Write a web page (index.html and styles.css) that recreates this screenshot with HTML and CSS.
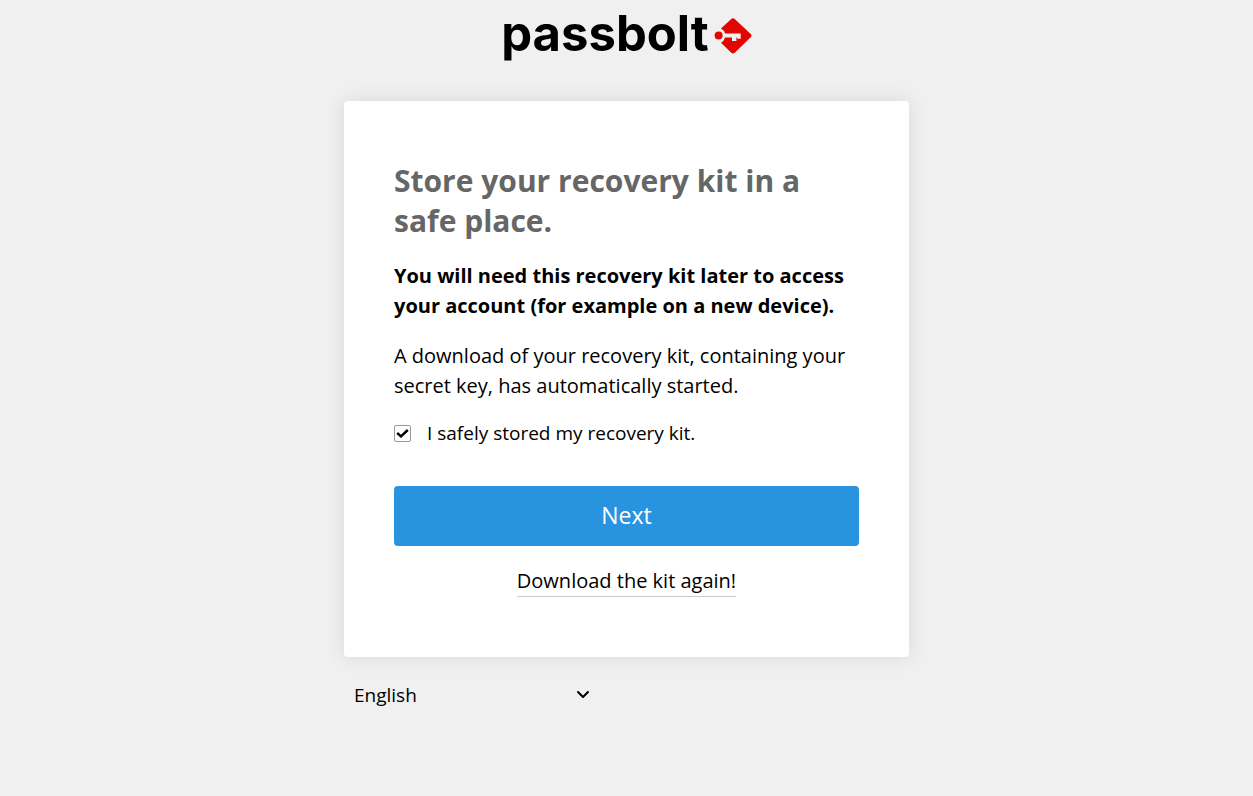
FILE: index.html
```html
<!DOCTYPE html>
<html lang="en">
<head>
  <meta charset="UTF-8" />
  <title>Passbolt</title>
  <meta name="viewport" content="width=device-width, initial-scale=1.0" />
  <link rel="stylesheet" href="styles.css">
</head>
<body>

  <div class="container">
    <header class="logo">
      <span class="logo-text">passbolt</span>
      <svg class="logo-icon" viewBox="0 0 38 36" width="38" height="36" aria-hidden="true">
        <path fill="#e10600" d="M17 1.2Q19 -.7 21 1.2L36.7 16Q38.3 17.6 36.7 19.2L21 34.5Q19 36.4 17 34.5L7 24.8Q10.2 22.8 11 19.4H18V23H22.4V19.4H23.2V20.8H26.7V15.4H11Q10.2 12.4 7 10.6Z" />
        <circle fill="#e10600" cx="4.6" cy="17.6" r="4" />
      </svg>
    </header>

    <main class="card">
      <h1>Store your recovery kit in a safe place.</h1>
      <p><strong>You will need this recovery kit later to access your account (for example on a new device).</strong></p>
      <p>A download of your recovery kit, containing your secret key, has automatically started.</p>
      <form>
        <div class="checkbox">
          <span class="checkbox-box">
            <input type="checkbox" id="stored" checked>
            <svg viewBox="0 0 17 17" width="17" height="17" aria-hidden="true">
              <path d="M3.2 8L7 11.3L13.8 5" />
            </svg>
          </span>
          <label for="stored">I safely stored my recovery kit.</label>
        </div>
        <button class="next-btn" type="button">Next</button>
      </form>
      <div class="download">
        <a href="#">Download the kit again!</a>
      </div>
    </main>

    <footer class="language">
      <select id="language" aria-label="Language">
        <option>English</option>
      </select>
      <svg viewBox="0 0 14 10" width="14" height="10" aria-hidden="true">
        <path d="M2 2L7 7L12 2" />
      </svg>
    </footer>
  </div>

</body>
</html>
```
FILE: styles.css
```css
* {
  box-sizing: border-box;
}

body {
  margin: 0;
  background: #f0f0f0;
  color: #000;
  font-family: 'Open Sans', sans-serif;
  font-size: 20px;
  line-height: 30px;
}

.container {
  width: 100%;
  max-width: 565px;
  margin: 0 auto;
}

.logo {
  display: flex;
  justify-content: center;
  align-items: center;
  gap: 5px;
  padding: 4px 0 37px;
}

.logo-text {
  font-family: 'Inter', sans-serif;
  font-size: 49px;
  font-weight: 700;
  line-height: 60px;
}

.logo-icon {
  margin-top: 4px;
}

.card {
  padding: 60px 50px;
  background: #fff;
  border-radius: 4px;
  box-shadow: 0 0 20px rgba(0, 0, 0, 0.1);
}

h1 {
  margin: 0 0 20px;
  color: #666;
  font-size: 30px;
  font-weight: 700;
  line-height: 40px;
}

p {
  margin: 0 0 20px;
}

.checkbox {
  display: flex;
  align-items: center;
  gap: 16px;
  margin-bottom: 40px;
  font-size: 19px;
  line-height: 25px;
}

.checkbox-box {
  display: grid;
}

.checkbox-box > * {
  grid-area: 1 / 1;
}

.checkbox-box input {
  appearance: none;
  width: 17px;
  height: 17px;
  margin: 0;
  background: #fff;
  border: 1px solid #999;
  border-radius: 2px;
}

.checkbox-box svg {
  fill: none;
  stroke: #000;
  stroke-width: 2.4;
  pointer-events: none;
  visibility: hidden;
}

.checkbox-box input:checked + svg {
  visibility: visible;
}

.next-btn {
  display: block;
  width: 100%;
  height: 60px;
  padding: 0 0 2px;
  background: #2894df;
  border: none;
  border-radius: 4px;
  color: #fff;
  font-family: inherit;
  font-size: 23px;
  cursor: pointer;
}

.download {
  display: flex;
  justify-content: center;
  margin-top: 20px;
}

.download a {
  border-bottom: 1px solid #ccc;
  color: #000;
  text-decoration: none;
}

.language {
  display: grid;
  align-items: center;
  width: 256px;
  max-width: 100%;
  margin-top: 18px;
}

.language > * {
  grid-area: 1 / 1;
}

.language select {
  appearance: none;
  width: 100%;
  height: 40px;
  padding: 0 10px;
  background: transparent;
  border: none;
  color: #000;
  font-family: inherit;
  font-size: 19px;
}

.language svg {
  justify-self: end;
  margin-right: 10px;
  fill: none;
  stroke: #000;
  stroke-width: 2;
  stroke-linecap: round;
  stroke-linejoin: round;
  pointer-events: none;
}
```
